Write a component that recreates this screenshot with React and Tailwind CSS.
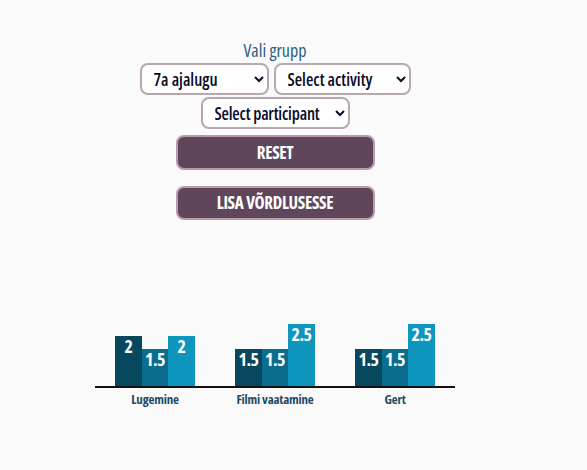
import React, { useState } from 'react';

const groups = [
  { name: 'Lugemine', values: [2, 1.5, 2] },
  { name: 'Filmi vaatamine', values: [1.5, 1.5, 2.5] },
  { name: 'Gert', values: [1.5, 1.5, 2.5] },
];

const barColors = ['bg-[#07485e]', 'bg-[#0a6d8d]', 'bg-[#0f96bf]'];
const barWidths = ['w-[27px]', 'w-[26px]', 'w-[27px]'];

export default function App() {
  const [group, setGroup] = useState('7a');
  const [activity, setActivity] = useState('');
  const [participant, setParticipant] = useState('');

  return (
    <div
      className="min-h-screen bg-[#fafafa] font-stretch-[75%]"
      style={{ fontFamily: "'Open Sans', 'DejaVu Sans Condensed', sans-serif" }}
    >
      <div className="w-[550px] flex flex-col items-center pt-[40px]">
        <label className="text-[18px] leading-[20px] text-[#2b5f7e] font-medium">Vali grupp</label>
        <div className="flex gap-[5px] mt-[3px]">
          <select
            value={group}
            onChange={(e) => setGroup(e.target.value)}
            className="w-[129px] h-[32px] bg-white border-2 border-[#b7a8af] rounded-lg pl-[8px] pr-[4px] text-[17px] text-[#0a0a2a] font-semibold font-stretch-[75%]"
          >
            <option value="7a">7a ajalugu</option>
          </select>
          <select
            value={activity}
            onChange={(e) => setActivity(e.target.value)}
            className="w-[137px] h-[32px] bg-white border-2 border-[#b7a8af] rounded-lg pl-[8px] pr-[4px] text-[17px] text-[#0a0a2a] font-semibold font-stretch-[75%]"
          >
            <option value="">Select activity</option>
          </select>
        </div>
        <select
          value={participant}
          onChange={(e) => setParticipant(e.target.value)}
          className="mt-[2px] w-[149px] h-[32px] bg-white border-2 border-[#b7a8af] rounded-lg pl-[8px] pr-[2px] text-[17px] text-[#0a0a2a] font-semibold font-stretch-[75%] tracking-[-0.2px]"
        >
          <option value="">Select participant</option>
        </select>
        <button className="mt-[6px] w-[199px] h-[35px] bg-[#5f465a] border-2 border-[#b99cac] rounded-lg text-white font-bold text-[17px] tracking-[-0.3px] uppercase">
          Reset
        </button>
        <button className="mt-[16px] w-[199px] h-[34px] bg-[#5f465a] border-2 border-[#b99cac] rounded-lg text-white font-bold text-[17px] tracking-[-0.3px] uppercase">
          Lisa võrdlusesse
        </button>
      </div>

      <div className="ml-[95px] mt-[96px] w-[360px]">
        <div className="flex border-b-2 border-[#111]">
          {groups.map((g) => (
            <div key={g.name} className="w-[120px] h-[70px] flex justify-center items-end">
              {g.values.map((v, i) => (
                <div
                  key={i}
                  className={`${barColors[i]} ${barWidths[i]} flex justify-center text-white font-bold text-[18px] leading-[20px] tracking-[-0.5px]`}
                  style={{ height: v * 25 }}
                >
                  {v}
                </div>
              ))}
            </div>
          ))}
        </div>
        <div className="flex">
          {groups.map((g) => (
            <div key={g.name} className="w-[120px] text-center text-[13px] font-bold text-[#1e4a66] tracking-[-0.2px] pt-[2px]">
              {g.name}
            </div>
          ))}
        </div>
      </div>
    </div>
  );
}
